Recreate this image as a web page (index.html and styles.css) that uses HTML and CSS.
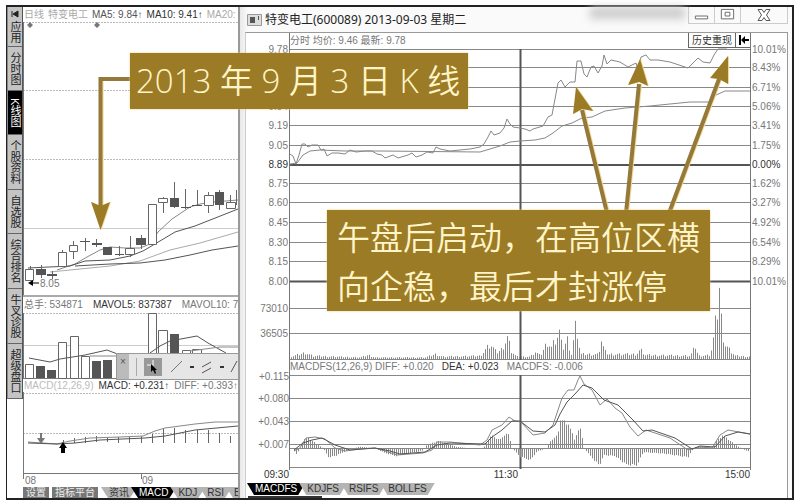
FILE: index.html
```html
<!DOCTYPE html>
<html lang="zh-CN">
<head>
<meta charset="utf-8">
<title>特变电工(600089)</title>
<link rel="stylesheet" href="styles.css">
</head>
<body>
<main class="frame">
  <nav class="side">
    <button class="side-tab t2"><svg class="pin" viewBox="0 0 8 8"><path d="M1 1v6M7 1L2 4l5 3z"/></svg>应用</button>
    <button class="side-tab t3">分时图</button>
    <button class="side-tab t3 active">K线图</button>
    <button class="side-tab t4">个股资料</button>
    <button class="side-tab t3">自选股</button>
    <button class="side-tab t4">综合排名</button>
    <button class="side-tab t4">牛叉诊股</button>
    <button class="side-tab t4">超级盘口</button>
  </nav>

  <section class="kline">
    <header class="legend top"><span class="pale">日线</span><span class="pale">特变电工</span><span>MA5: 9.84<b>↑</b></span><span class="dark">MA10: 9.41<b>↑</b></span><span class="pale">MA20:</span></header>
    <svg class="chart" viewBox="23 22 215 275">
      <path class="dash" d="M23 22.5H238M23 90.5H238M23 159.5H238"/>
      <path class="soft" d="M23 228.5H238"/>
      <path class="edge" d="M23.5 22V297"/>
      <path class="thick" d="M23 296H238"/>
      <path fill="#777" d="M30 22l3 3-3 3-3-3zM97 22l3 3-3 3-3-3z"/>
      <path class="line" d="M57 270L75 264 87 257 100 250 110 247 125 248 140 248 150 244 158 232 172 219 190 207 200 204 213 202 238 200"/>
      <path class="line dk" d="M28 268L70 266 85 261 110 260 130 256 143 251 160 241 175 232 195 226 238 209"/>
      <path class="line lt" d="M50 272L80 269 110 266 140 261 170 250 200 243 238 232"/>
      <path class="line dk" d="M75 266L110 264 140 263 165 260 190 255 212 250 238 246"/>
      <path class="wick" d="M30.500 266V269M41.500 265V278M52.500 271V279M62.500 250V253M73.500 241V259M85.500 238V251M96.500 239V247M119.500 246V256M130.500 236V257M141.500 235V249M163.500 197V213M174.500 182V208M185.500 189V209M197.500 190V206M208.500 192V213M219.500 190V210M230.500 195V202M236.500 190V205"/>
      <path class="hollow" d="M25.500 269.500h8v11h-8zM58.500 252.500h8v14h-8zM69.500 245.500h8v6h-8zM125.500 248.500h9v6h-9zM148.500 204.500h8v40h-8zM158.500 198.500h9v4h-9zM204.500 195.500h9v10h-9zM226.500 202.500h9v6h-9z"/>
      <path class="solid" d="M36 269h10v6H36zM47 274h10v2H47zM80 241h10v1H80zM92 243h10v2H92zM103 247h9v8h-9zM115 254h9v1h-9zM136 238h10v7h-10zM170 198h9v9h-9zM181 207h10v1h-10zM192 205h10v1h-10zM215 192h9v13h-9z"/>
      <path d="M28 283l5-3v6zM32 282.500h7v1h-7z"/>
      <text x="40" y="287">8.05</text>
      <g class="arrow">
        <path class="shaft" d="M133 79H100.500V206"/>
        <path class="head" d="M100.500 230L91 202l9.500 4 9.500-4z"/>
      </g>
    </svg>
    <header class="legend vol"><span class="mid">总手: 534871</span><span class="dark">MAVOL5: 837387</span><span class="mid">MAVOL10: 7</span></header>
    <svg class="chart" viewBox="23 313 215 66">
      <path class="dash" d="M23 313.500H238"/>
      <path class="soft" d="M23 345.500H238"/>
      <path class="edge" d="M23.500 313V379M23 378.500H238"/>
      <path class="hollow" d="M25.500 364.500h8v14h-8zM58.500 342.500h8v36h-8zM70.500 336.500h8v42h-8zM81.500 356.500h8v22h-8zM148.500 313.500h8v65h-8zM158.500 330.500h9v48h-9zM182.500 350.500h8v28h-8zM192.500 349.500h9v29h-9z"/>
      <path class="solid" d="M36 366h9v12h-9zM47 370h9v8h-9zM92 361h9v17h-9zM103 360h9v18h-9zM170 334h9v44h-9z"/>
      <path class="line dk" d="M29 358L50 362 60 359 85 355 107 350 120 355M150 353L160 346 170 341 197 336 208 343 226 353"/>
      <path class="line" d="M90 356H116M190 351L220 347H238"/>
    </svg>
    <header class="legend macd"><span class="faint">MACD(12,26,9)</span><span class="dark">MACD: +0.231<b>↑</b></span><span class="mid">DIFF: +0.393<b>↑</b></span></header>
    <svg class="chart" viewBox="23 392 215 95">
      <path class="dash" d="M23 393.500H238M23 433.500H238"/>
      <path class="edge" d="M23.500 392V474M23 473.500H238M141.500 474v5M23.500 474v5"/>
      <path class="wick" d="M63.500 440V444M74.500 438V443M85.500 437V443M96.500 436V442M107.500 437V442M118.500 437V443M129.500 437V443M141.500 436V443M152.500 434V443M163.500 428V443M174.500 428V443M185.500 430V443M197.500 430V443M208.500 430V443M219.500 433V443M230.500 436V443"/>
      <path class="line" d="M28 442L57 444 70 441 90 438 120 437 143 436 155 431 165 428 195 424 215 422H238"/>
      <path class="line dk" d="M28 443L57 444 75 443 100 440 145 438 165 436 195 430 238 426"/>
      <path fill="#777" d="M40 433h2v5h3l-4 6-4-6h3z"/>
      <path d="M61 453h4v-5h2l-4-6-4 6h2z"/>
      <text x="25" y="484">08</text><text x="142" y="484">09</text>
    </svg>
    <div class="tabs cut">
      <button class="block">设置</button><button class="block">指标平台</button><button class="tab">资讯</button><button class="tab active">MACD</button><button class="tab">KDJ</button><button class="tab">RSI</button><button class="tab">B</button>
    </div>
    <div class="tools">
      <button class="grip" aria-label="关闭">×</button>
      <i class="sep"></i>
      <button class="tool on" aria-label="选择"><svg viewBox="0 0 18 18"><path fill="none" stroke="#ccc" stroke-width="2" d="M3 7h6M9 2v6"/><path d="M7 6v8l2-2 2 4 1-1-1-3h2z"/></svg></button>
      <button class="tool" aria-label="线段"><svg viewBox="0 0 18 18"><path stroke="#777" d="M3 14L14 3"/></svg></button>
      <i class="dot"></i>
      <button class="tool" aria-label="平行线"><svg viewBox="0 0 18 18"><path stroke="#555" d="M4 9l9-5M4 15l9-5"/></svg></button>
      <i class="dot"></i>
      <button class="tool" aria-label="射线"><svg viewBox="0 0 18 18"><path stroke="#555" d="M3 14L9 3"/></svg></button>
    </div>
  </section>

  <section class="window">
    <header class="title">
      <svg class="app" viewBox="0 0 15 12"><path fill="#ddd" stroke="#999" d="M.5.5h14v11H.5z"/><path fill="#555" d="M3 3h5v6H3zM11 2h1v4h-1z"/></svg>
      <h1>特变电工(600089) 2013-09-03 星期二</h1>
      <i class="smear"></i>
      <div class="controls">
        <button aria-label="最小化"><svg viewBox="0 0 18 14"><path fill="#fff" stroke="#666" d="M2.500 8.500h13v3h-13z"/></svg></button>
        <button aria-label="最大化"><svg viewBox="0 0 18 14"><path fill="#fff" stroke="#666" d="M2.500 1.500h13v10h-13zM6.500 4.500h5v4h-5z"/></svg></button>
        <button class="close" aria-label="关闭窗口"><svg viewBox="0 0 18 14"><path fill="#fff" stroke="#555" d="M3 1.500h4l2 3 2-3h4L11.500 7l3.500 5.500h-4l-2-3-2 3H3L6.500 7z"/></svg></button>
      </div>
    </header>
    <div class="pane">
      <header class="info"><span>分时 均价: 9.46 最新: 9.78</span>
        <button class="replay">历史重现</button><button class="back" aria-label="返回"><svg viewBox="0 0 12 12"><path d="M1 1h2v10H1zM3 6l4-4v3h4v2H7v3z"/></svg></button></header>
      <div class="plot">
        <svg class="chart" viewBox="246 48 541 312">
          <path class="grid" d="M289 49.500H750M289 67.500H750M289 87.500H750M289 106.500H750M289 125.500H750M289 145.500H750M289 183.500H750M289 202.500H750M289 222.500H750M289 242.500H750M289 261.500H750M289 308.500H750M289 333.500H750M289 359.500H750"/>
          <path class="axis" d="M289 165H750M289 281.500H750M520.500 49V360"/>
          <path class="edge" d="M289.500 33V360M750.500 33V360"/>
          <path class="bars" id="volume"/>
          <path class="line" d="M290 154L293 156 296 164 299 155 302 144 305 144 308 147 312 145 318 145 321 150 324 149 327 156 332 153 338 153 345 154 350 150 356 152 365 151 372 151 377 154 382 155 385 158 393 155 398 158 408 155 412 153 416 157 422 155 427 152 433 153 436 147 440 149 450 151 460 150 470 149 480 147 484 144 488 137 491 131 494 135 500 133 504 128 507 119 510 124 513 127 520 128 525 129 530 131 533 129 543 126 548 117 552 115 555 99 558 83 561 80 565 87 570 82 575 82 577 61 581 61 584 74 587 77 591 67 594 66 598 73 602 66 604 55 607 64 611 60 620 62 628 67 636 63 638 70 641 57 646 55 650 60 658 60 670 62 685 67 688 68 693 63 698 58 703 62 710 63 714 55 718 49H727"/>
          <path class="line" d="M290 164L297 163 303 155 310 151 320 150 345 151 380 151 480 152 490 149 500 146 510 142 520 141 535 140 545 138 553 133 562 126 572 123 582 118 592 117 605 111 625 108 650 106 690 102 710 102 716 95 725 91 750 91"/>
          <g class="left">
            <text x="288" y="53">9.78</text><text x="288" y="110">9.34</text><text x="288" y="129">9.19</text><text x="288" y="149">9.05</text><text class="dark" x="288" y="168">8.89</text><text x="288" y="187">8.75</text><text x="288" y="206">8.60</text><text x="288" y="226">8.45</text><text x="288" y="246">8.30</text><text x="288" y="265">8.15</text><text x="288" y="285">8.00</text><text x="288" y="312">73010</text><text x="288" y="337">36505</text>
          </g>
          <g>
            <text x="752" y="53">10.01%</text><text x="752" y="71">8.43%</text><text x="752" y="91">6.71%</text><text x="752" y="110">5.06%</text><text x="752" y="129">3.41%</text><text x="752" y="149">1.75%</text><text class="dark" x="752" y="168">0.00%</text><text x="752" y="187">1.62%</text><text x="752" y="206">3.27%</text><text x="752" y="226">4.92%</text><text x="752" y="246">6.54%</text><text x="752" y="265">8.29%</text><text x="752" y="285">10.01%</text>
          </g>
          <g class="arrow">
            <path class="shaft" d="M607 213L582 110M626 213L639 84M669 213L719 79"/>
            <path class="head" d="M576 87l-3 27 9-5 11 2zM640 59l-12 26 11-3 9 4zM728 56l-18 22 9 1 9 5z"/>
          </g>
        </svg>
        <p class="callout note">午盘后启动，在高位区横<br>向企稳，最后才封涨停</p>
      </div>
      <header class="legend dfs"><span class="mid">MACDFS(12,26,9) DIFF: +0.020</span><span class="dark">DEA: +0.023</span><span class="mid">MACDFS: -0.006</span></header>
      <svg class="chart" viewBox="246 374 541 109">
        <path class="grid" d="M289 375.500H750M289 398.500H750M289 421.500H750M289 444.500H750M289 448.500H750M289 467.500H750"/>
        <path class="axis" d="M520.500 375V469"/>
        <path class="edge" d="M289.500 360V470M750.500 360V470"/>
        <path class="bars" id="macd"/>
        <path class="line" d="M294 451L300 448 306 438 315 437 325 439 335 448 345 451 360 449 375 448 385 451 397 455 410 454 423 453 432 450 437 442 450 442 480 445 487 440 492 430 502 425 509 417 515 421 521 422 533 435 545 433 553 425 558 410 562 398 568 390 574 390 578 380 580 376 584 384 592 390 600 405 607 399 615 408 622 413 630 427 638 436 646 430 670 438 688 450 700 447 712 448 720 435 728 430 750 434"/>
        <path class="line dk" d="M294 450L303 443 312 440 322 438 335 445 350 450 375 448 390 451 400 454 425 452 437 445 450 443 485 444 492 437 502 430 512 421 520 421 533 431 545 432 555 425 560 414 567 402 575 394 583 385 592 388 604 400 618 405 633 420 643 431 652 430 675 438 692 449 700 446 715 447 725 436 738 432 750 434"/>
        <g class="left">
          <text x="289" y="380">+0.115</text><text x="289" y="402">+0.080</text><text x="289" y="425">+0.043</text><text x="289" y="448">+0.007</text>
          <text class="dark" x="289" y="478">09:30</text><text class="dark" x="518" y="478">11:30</text><text class="dark" x="750" y="478">15:00</text>
        </g>
      </svg>
      <div class="tabs">
        <button class="tab active">MACDFS</button><button class="tab">KDJFS</button><button class="tab">RSIFS</button><button class="tab">BOLLFS</button>
      </div>
      <i class="strip"></i>
    </div>
  </section>
  <p class="callout day">2013 年 9 月 3 日 K 线</p>
</main>
<script src="bars.js"></script>
</body>
</html>
```
FILE: styles.css
```css
* { box-sizing: border-box; }
body {
  margin: 0;
  background: #fff;
  color: #555;
  font: 10px/12px "Liberation Sans", "Noto Sans CJK SC", sans-serif;
}
button {
  margin: 0;
  padding: 0;
  border: 0;
  background: none;
  color: inherit;
  font: inherit;
}
h1, p { margin: 0; }
svg { display: block; }

.frame {
  position: relative;
  display: grid;
  grid-template-columns: 16px minmax(0, 215fr) minmax(0, 554fr);
  margin: 5px 3px 3px 6px;
  border: 2px solid #222;
  border-left-width: 1px;
}

/* Side navigation */
.side { display: flex; flex-direction: column; border-right: 1px solid #555; align-self: start; }
.side-tab {
  display: flex;
  align-items: center;
  justify-content: center;
  gap: 3px;
  writing-mode: vertical-rl;
  background: #c4c4c4;
  color: #222;
  border-bottom: 1px solid #666;
  border-left: 1px solid #888;
  font-size: 11px;
  line-height: 14px;
}
.side-tab.active { background: #000; color: #fff; }
.t2 { height: 40px; }
.t3 { height: 44px; }
.t4 { height: 55px; }
.pin { flex: none; width: 8px; height: 8px; fill: #222; stroke: #222; }

/* Daily chart */
.kline { position: relative; overflow: hidden; background: #fff; }
.legend {
  display: flex;
  align-items: center;
  gap: 8px;
  padding-left: 1px;
  white-space: nowrap;
  overflow: hidden;
}
.top { height: 15px; gap: 4px; }
.vol { height: 16px; gap: 10px; }
.macd { height: 13px; gap: 5px; }
.dfs { height: 14px; padding-left: 44px; }
.faint { color: #bbb; }
.pale { color: #aaa; }
.mid { color: #777; }
.dark { color: #333; fill: #333; }

.chart { width: 100%; height: auto; overflow: visible; }
.chart text { font-size: 10px; fill: #777; }
.chart text.dark { fill: #333; }
.left { text-anchor: end; }
.chart path.grid, .edge, .axis, .soft, .dash, .thick, .line, .wick, .bars { fill: none; }
.grid { stroke: #888; }
.edge { stroke: #777; }
.axis { stroke: #555; stroke-width: 2; }
.soft { stroke: #ccc; }
.dash { stroke: #bbb; stroke-dasharray: 2 1; }
.thick { stroke: #aaa; stroke-width: 2; }
.line { stroke: #888; }
.dk { stroke: #555; }
.lt { stroke: #aaa; }
.wick { stroke: #666; }
.bars { stroke: #888; }
.hollow { fill: #fff; stroke: #666; }
.solid { fill: #555; }
.arrow { filter: drop-shadow(1px 0 0 #f0d890); }
.shaft { fill: none; stroke: #94793a; stroke-width: 4; }
.head { fill: #9c7b26; }

/* Tab strips */
.tabs { display: flex; height: 12px; padding-left: 1px; color: #333; line-height: 12px; }
.tab {
  flex: none;
  padding: 0 8px;
  margin-right: -6px;
  background: #b4b4b4;
  clip-path: polygon(0 0, 100% 0, calc(100% - 7px) 100%, 7px 100%);
}
.tab.active { position: relative; background: #000; color: #fff; }
.cut { height: 11px; padding: 0; overflow: hidden; line-height: 11px; }
.block { flex: none; padding: 0 3px; margin-right: 3px; background: #777; color: #eee; }
.strip { display: block; width: 74px; height: 2px; margin: 1px 0 0 2px; background: #333; }

/* Drawing tools */
.tools {
  position: absolute;
  left: 93px;
  top: 346px;
  right: 0;
  display: flex;
  align-items: center;
  height: 27px;
  overflow: hidden;
  background: #e6e6e6;
  border: 1px solid #999;
  border-right: 0;
}
.grip { flex: none; align-self: stretch; width: 12px; background: #bbb; line-height: 12px; padding-bottom: 10px; }
.sep { flex: none; width: 1px; height: 18px; margin: 0 7px; background: #aaa; }
.tool { flex: none; width: 18px; height: 18px; }
.tool + .tool { margin-left: 6px; }
.tool.on { background: #999; }
.dot { flex: none; width: 4px; height: 2px; margin: 0 4px; background: #333; }

/* Intraday window */
.window {
  position: relative;
  display: flex;
  flex-direction: column;
  padding: 0 4px 0 5px;
  border-left: 2px solid #999;
  background: linear-gradient(90deg, #e8e8e8, #fafafa 8px);
}
.title { display: flex; align-items: center; height: 25px; padding-left: 2px; gap: 3px; }
.app { flex: none; width: 15px; height: 12px; }
.title h1 { flex: none; font: 12px/20px "Noto Sans", "Noto Sans CJK SC", sans-serif; color: #222; }
.smear { width: 95px; height: 12px; margin: 0 0 0 auto; background: #ccc; filter: blur(4px); align-self: flex-start; }
.controls { display: flex; align-self: flex-start; height: 17px; border: 1px solid #ccc; border-top: 0; }
.controls button { width: 26px; padding: 0 4px; border-right: 1px solid #ccc; }
.controls .close { width: 46px; padding: 0 14px; border: 0; }
.pane { flex: 1; background: #fff; border: 1px solid #999; border-left-color: #ccc; border-bottom: 0; }
.info { display: flex; height: 15px; padding: 0 37px 0 44px; line-height: 15px; color: #777; }
.replay { margin-left: auto; width: 48px; border: 1px solid #666; border-top: 0; color: #333; line-height: 13px; }
.back { width: 14px; padding-left: 2px; border: 1px solid #666; border-width: 0 0 1px; }
.back svg { width: 12px; height: 12px; }
.plot { position: relative; }

/* Annotations */
.callout {
  position: absolute;
  background: #9c7b26;
  color: #fff5c8;
  font: 350 33px/49px "Open Sans", "Noto Sans CJK SC", sans-serif;
  white-space: nowrap;
  box-shadow: 0 0 2px #e8d080;
}
.day { left: 123px; top: 46px; padding: 3px 8px 4px 6px; }
.note { left: 81px; top: 162px; padding: 3px 10px 0; }
```
FILE: bars.js
```js
// Draws one bar every two units, following an envelope of [x, height] points.
function drawBars(id, base, points, jitter) {
  let d = "";
  for (let i = 1, x = points[0][0]; x <= points[points.length - 1][0]; x += 2) {
    while (points[i][0] < x) i++;
    const [x0, h0] = points[i - 1];
    const [x1, h1] = points[i];
    const h = h0 + (h1 - h0) * (x - x0) / (x1 - x0);
    const k = 1 - jitter * ((x * 37 % 11) / 11);
    d += `M${x + 0.5} ${base}v${(-h * k).toFixed(1)}`;
  }
  document.getElementById(id).setAttribute("d", d);
}
drawBars("volume", 359, [[291, 3], [305, 8], [312, 4], [360, 2], [368, 5], [375, 2], [425, 2], [435, 6], [442, 3], [480, 4], [485, 12], [490, 19], [496, 8], [501, 12], [507, 28], [511, 10], [516, 3], [530, 3], [535, 9], [540, 4], [547, 22], [551, 15], [559, 34], [562, 12], [567, 25], [571, 6], [575, 40], [577, 34], [580, 6], [598, 6], [601, 24], [604, 10], [608, 6], [636, 6], [640, 12], [645, 5], [690, 4], [695, 16], [698, 4], [710, 5], [713, 25], [717, 62], [719, 92], [721, 50], [724, 20], [729, 12], [735, 4], [749, 3]], 0.5);
drawBars("macd", 448.5, [[292, 0], [296, -6], [300, 0], [303, 10], [308, 11], [315, 6], [323, 0], [328, -9], [335, -8], [345, -3], [352, 0], [360, 2], [375, 0], [385, -5], [395, -8], [410, -5], [423, -2], [425, 3], [437, 8], [445, 6], [455, 2], [470, 0], [483, 0], [487, 8], [492, 15], [497, 9], [508, 16], [512, 0], [520, -9], [530, -12], [537, -3], [546, 0], [551, 9], [557, 14], [560, 31], [568, 26], [574, 10], [580, 23], [584, 0], [590, -8], [599, -18], [604, -7], [615, -8], [625, -17], [636, -18], [643, -4], [660, -5], [680, -8], [688, -9], [693, 0], [700, 2], [713, 1], [716, 8], [722, 14], [730, 8], [738, 2], [745, -2], [750, -3]], 0.15);
```
